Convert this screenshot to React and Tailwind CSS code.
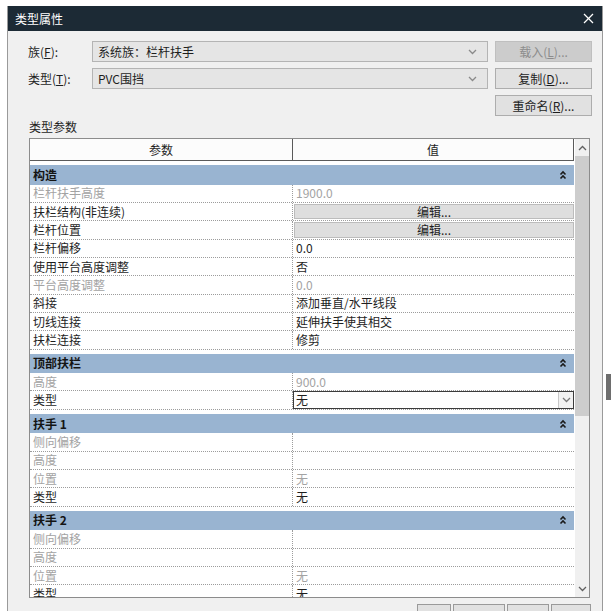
import React from 'react'

const groups = [
  {
    name: '构造',
    rows: [
      { p: '栏杆扶手高度', v: '1900.0', dis: true },
      { p: '扶栏结构(非连续)', btn: true },
      { p: '栏杆位置', btn: true },
      { p: '栏杆偏移', v: '0.0' },
      { p: '使用平台高度调整', v: '否' },
      { p: '平台高度调整', v: '0.0', dis: true },
      { p: '斜接', v: '添加垂直/水平线段' },
      { p: '切线连接', v: '延伸扶手使其相交' },
      { p: '扶栏连接', v: '修剪' },
    ],
  },
  {
    name: '顶部扶栏',
    rows: [
      { p: '高度', v: '900.0', dis: true },
      { p: '类型', v: '无', combo: true },
    ],
  },
  {
    name: '扶手 1',
    rows: [
      { p: '侧向偏移', v: '', dis: true },
      { p: '高度', v: '', dis: true },
      { p: '位置', v: '无', dis: true },
      { p: '类型', v: '无' },
    ],
  },
  {
    name: '扶手 2',
    rows: [
      { p: '侧向偏移', v: '', dis: true },
      { p: '高度', v: '', dis: true },
      { p: '位置', v: '无', dis: true },
      { p: '类型', v: '无' },
    ],
  },
]

const Collapse = () => (
  <svg width="8" height="10" viewBox="0 0 8 10" fill="none" stroke="#1a1a1a" strokeWidth="1.6">
    <polyline points="1.5,4.5 4,2 6.5,4.5" />
    <polyline points="1.5,8.5 4,6 6.5,8.5" />
  </svg>
)

const Chevron = ({ up, color = '#6b6b6b' }) => (
  <svg width="9" height="6" viewBox="0 0 9 6" fill="none" stroke={color} strokeWidth="1.3">
    {up ? <polyline points="1,5 4.5,1.5 8,5" /> : <polyline points="1,1 4.5,4.5 8,1" />}
  </svg>
)

const Combo = ({ children }) => (
  <div className="flex-1 h-[21px] flex items-center bg-[#e5e5e5] border border-[#b4b4b4] pl-[5px] pr-[10px]">
    <span className="flex-1 text-[12px] text-[#1e1e1e]">{children}</span>
    <Chevron color="#8a8a8a" />
  </div>
)

const Btn = ({ children, disabled }) => (
  <div
    className={
      'w-[97px] h-[21px] flex items-center justify-center border text-[12px] ' +
      (disabled
        ? 'bg-[#cccccc] border-[#bfbfbf] text-[#8c8c8c]'
        : 'bg-[#e1e1e1] border-[#adadad] text-[#1e1e1e]')
    }
  >
    {children}
  </div>
)

const Row = ({ r }) => {
  const txt = r.dis ? 'text-[#a3a3a3]' : 'text-[#1e1e1e]'
  return (
    <div className="flex h-[18.35px] border-b border-dotted border-[#9c9c9c] text-[12px]">
      <div className={'w-[263px] flex items-center pl-[3px] border-r border-dotted border-[#9c9c9c] ' + txt}>
        {r.p}
      </div>
      <div className="flex-1 flex items-stretch">
        {r.btn ? (
          <div className="flex-1 my-[1px] ml-[1px] flex items-center justify-center bg-[#dedede] border border-[#bcbcbc] text-[#1e1e1e]">
            编辑...
          </div>
        ) : r.combo ? (
          <div className="flex-1 flex items-center border border-[#3c3c3c] bg-white">
            <span className="flex-1 pl-[2px] text-[#1e1e1e]">{r.v}</span>
            <div className="w-[15px] self-stretch flex items-center justify-center border-l border-[#c8c8c8] bg-[#f2f2f2]">
              <Chevron color="#7a7a7a" />
            </div>
          </div>
        ) : (
          <div className={'flex-1 flex items-center pl-[3px] ' + txt}>{r.v}</div>
        )}
      </div>
    </div>
  )
}

export default function App() {
  return (
    <div className="relative w-[611px] h-[611px] overflow-hidden bg-white pt-[6px] pl-[7px] font-['Noto_Sans_CJK_SC','Liberation_Sans',sans-serif]">
      {/* bit of the drawing behind the dialog */}
      <div className="absolute left-[606px] top-[374px] w-[6px] h-[26px] bg-[#6e6e6e]" />

      <div className="w-[596px] h-[620px] bg-[#f0f0f0] border-x border-[#9a9a9a] flex flex-col">
        {/* title bar */}
        <div className="h-[27px] bg-[#1c2a35] flex items-center justify-between pl-[7px] pr-[8px]">
          <span className="text-white text-[12px]">类型属性</span>
          <svg width="11" height="11" viewBox="0 0 11 11" stroke="#ffffff" strokeWidth="1.2">
            <line x1="1" y1="1" x2="10" y2="10" />
            <line x1="10" y1="1" x2="1" y2="10" />
          </svg>
        </div>

        <div className="pl-[20px] pr-[10px] flex flex-col">
          <div className="mt-[10px] flex items-center">
            <span className="w-[64px] text-[12px] text-[#1e1e1e]">
              族(<u>F</u>):
            </span>
            <Combo>系统族：栏杆扶手</Combo>
            <div className="ml-[7px]">
              <Btn disabled>
                载入(<u>L</u>)...
              </Btn>
            </div>
          </div>
          <div className="mt-[6px] flex items-center">
            <span className="w-[64px] text-[12px] text-[#1e1e1e]">
              类型(<u>T</u>):
            </span>
            <Combo>PVC围挡</Combo>
            <div className="ml-[7px]">
              <Btn>
                复制(<u>D</u>)...
              </Btn>
            </div>
          </div>
          <div className="mt-[6px] flex justify-end">
            <Btn>
              重命名(<u>R</u>)...
            </Btn>
          </div>
          <div className="mt-[3px] text-[12px] leading-[16px] text-[#1e1e1e] pl-[1px]">类型参数</div>

          {/* parameter grid */}
          <div className="mt-[3px] ml-[1px] w-[561px] h-[460px] border border-[#8c8c8c] bg-white flex overflow-hidden">
            <div className="w-[544px] flex flex-col overflow-hidden">
              <div className="h-[22px] shrink-0 flex border-b border-[#5a5a5a] bg-[#fcfcfc] text-[12px] text-[#1e1e1e]">
                <div className="w-[263px] flex items-center justify-center border-r border-[#5a5a5a]">参数</div>
                <div className="flex-1 flex items-center justify-center border-r border-[#5a5a5a]">值</div>
              </div>
              {groups.map((g) => (
                <div key={g.name} className="shrink-0 flex flex-col">
                  <div className="mt-[4px] h-[19.5px] bg-[#99b4d1] flex items-center justify-between pl-[3px] pr-[6px] border-r border-[#99b4d1]">
                    <span className="text-[12px] font-bold text-[#141414]">{g.name}</span>
                    <Collapse />
                  </div>
                  {g.rows.map((r, i) => (
                    <Row key={i} r={r} />
                  ))}
                </div>
              ))}
            </div>
            <div className="ml-[1px] w-[14px] flex flex-col bg-[#f0f0f0]">
              <div className="h-[17px] flex items-center justify-center">
                <Chevron up color="#606060" />
              </div>
              <div className="h-[260px] bg-[#cdcdcd]" />
              <div className="flex-1" />
              <div className="h-[17px] flex items-center justify-center">
                <Chevron color="#606060" />
              </div>
            </div>
          </div>

          {/* bottom buttons, mostly below the frame */}
          <div className="mt-[6px] flex justify-end gap-[2px] pr-[1px]">
            <div className="w-[34px] h-[22px] border border-[#9a9a9a] bg-[#e1e1e1]" />
            <div className="w-[52px] h-[22px] border border-[#9a9a9a] bg-[#e1e1e1]" />
            <div className="w-[42px] h-[22px] border border-[#9a9a9a] bg-[#e1e1e1]" />
            <div className="w-[40px] h-[22px] border border-[#9a9a9a] bg-[#e1e1e1]" />
          </div>
        </div>
      </div>
    </div>
  )
}
